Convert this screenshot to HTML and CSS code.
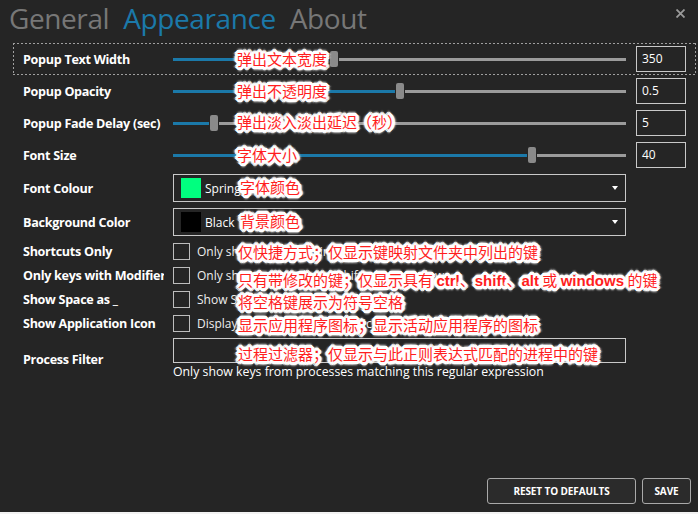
FILE: index.html
```html
<!DOCTYPE html>
<html>
<head>
<meta charset="utf-8">
<link rel="stylesheet" href="styles.css">
</head>
<body>
<div class="window">
  <header class="tabs">
    <span class="tab">General</span>
    <span class="tab active">Appearance</span>
    <span class="tab">About</span>
    <span class="close"><svg width="9" height="9" viewBox="0 0 9 9"><path d="M0.5 0.5L8.5 8.5M8.5 0.5L0.5 8.5" stroke="#9a9a9a" stroke-width="1.8"/></svg></span>
  </header>

  <div class="form">
    <div class="row slider-row focused">
      <div class="label">Popup Text Width</div>
      <div class="slider"><div class="fill" style="width:156px"></div><div class="thumb"></div><div class="rest"></div></div>
      <div class="num">350</div>
    </div>
    <div class="row slider-row">
      <div class="label">Popup Opacity</div>
      <div class="slider"><div class="fill" style="width:222px"></div><div class="thumb"></div><div class="rest"></div></div>
      <div class="num">0.5</div>
    </div>
    <div class="row slider-row">
      <div class="label">Popup Fade Delay (sec)</div>
      <div class="slider"><div class="fill" style="width:36px"></div><div class="thumb"></div><div class="rest"></div></div>
      <div class="num">5</div>
    </div>
    <div class="row slider-row">
      <div class="label">Font Size</div>
      <div class="slider"><div class="fill" style="width:354px"></div><div class="thumb"></div><div class="rest"></div></div>
      <div class="num">40</div>
    </div>

    <div class="row combo-row">
      <div class="label">Font Colour</div>
      <div class="combo"><span class="swatch spring"></span><span class="combo-text">SpringGreen</span><span class="arrow"></span></div>
    </div>
    <div class="row combo-row">
      <div class="label">Background Color</div>
      <div class="combo"><span class="swatch black"></span><span class="combo-text">Black</span><span class="arrow"></span></div>
    </div>

    <div class="row check-row">
      <div class="label">Shortcuts Only</div>
      <div class="checkline"><span class="check"></span><span class="check-text">Only show keys listed in the keymaps folder</span></div>
    </div>
    <div class="row check-row">
      <div class="label">Only keys with Modifiers</div>
      <div class="checkline"><span class="check"></span><span class="check-text">Only show keys with ctrl, shift, alt or windows</span></div>
    </div>
    <div class="row check-row">
      <div class="label">Show Space as _</div>
      <div class="checkline"><span class="check"></span><span class="check-text">Show Space as a symbol</span></div>
    </div>
    <div class="row check-row">
      <div class="label">Show Application Icon</div>
      <div class="checkline"><span class="check"></span><span class="check-text">Display icon of the active application</span></div>
    </div>

    <div class="row filter-row">
      <div class="label">Process Filter</div>
      <div class="filter">
        <div class="filter-box"></div>
        <div class="helper">Only show keys from processes matching this regular expression</div>
      </div>
    </div>
  </div>

  <div class="actions">
    <button class="btn reset">Reset to defaults</button>
    <button class="btn save">Save</button>
  </div>

  <div class="note n1">弹出文本宽度</div>
  <div class="note n2">弹出不透明度</div>
  <div class="note n3">弹出淡入淡出延迟（秒）</div>
  <div class="note n4">字体大小</div>
  <div class="note n5">字体颜色</div>
  <div class="note n6">背景颜色</div>
  <div class="note n7">仅快捷方式；仅显示键映射文件夹中列出的键</div>
  <div class="note n8">只有带修改的键；仅显示具有 <b>ctrl</b>、<b>shift</b>、<b>alt</b> 或 <b>windows</b> 的键</div>
  <div class="note n9">将空格键展示为符号空格</div>
  <div class="note n10">显示应用程序图标；显示活动应用程序的图标</div>
  <div class="note n11">过程过滤器；仅显示与此正则表达式匹配的进程中的键</div>
</div>
</body>
</html>
```
FILE: styles.css
```css
html, body {
  margin: 0;
  padding: 0;
  background: #f2f2f2;
}

.window {
  position: relative;
  width: 698px;
  height: 512px;
  background: #252525;
  color: #ffffff;
  font-family: "Open Sans", "Noto Sans", sans-serif;
  display: flex;
  flex-direction: column;
  overflow: hidden;
}

/* header */
.tabs {
  height: 43px;
  display: flex;
  align-items: flex-start;
  padding-left: 9px;
  box-sizing: border-box;
}
.tab {
  font-size: 28px;
  line-height: 34px;
  padding-top: 1px;
  margin-right: 14px;
  color: #777777;
  letter-spacing: -0.4px;
}
.tab.active {
  color: #1b79a9;
}
.close {
  margin-left: auto;
  margin-top: 9px;
  margin-right: 13px;
  width: 9px;
  height: 9px;
  display: flex;
}

/* form */
.form {
  padding: 3px 0 0 16px;
  display: flex;
  flex-direction: column;
}
.row {
  position: relative;
  width: 677px;
  box-sizing: border-box;
  padding-left: 7px;
  display: grid;
  grid-template-columns: 140px 453px 50px;
  column-gap: 10px;
  align-items: center;
}
.label {
  width: 141px;
  overflow: hidden;
  white-space: nowrap;
  font-weight: 700;
  font-size: 12.6px;
  letter-spacing: -0.3px;
}

.slider-row {
  height: 26px;
  margin-bottom: 6px;
}
.focused::before {
  content: "";
  position: absolute;
  left: -3px;
  right: -3px;
  top: -3px;
  bottom: -3px;
  background:
    repeating-linear-gradient(90deg, #a0a0a0 0 2px, transparent 2px 4px) top / 100% 1px no-repeat,
    repeating-linear-gradient(90deg, #a0a0a0 0 2px, transparent 2px 4px) bottom / 100% 1px no-repeat,
    repeating-linear-gradient(180deg, #a0a0a0 0 2px, transparent 2px 4px) left / 1px 100% no-repeat,
    repeating-linear-gradient(180deg, #a0a0a0 0 2px, transparent 2px 4px) right / 1px 100% no-repeat;
  pointer-events: none;
}
.slider {
  height: 26px;
  display: flex;
  align-items: center;
}
.fill {
  height: 3px;
  background: #1b79a9;
}
.thumb {
  width: 8px;
  height: 16px;
  margin: 0 1px;
  border-radius: 2px;
  background: #8a8a8a;
}
.rest {
  flex: 1;
  height: 3px;
  background: #9b9b9b;
}
.num {
  height: 26px;
  box-sizing: border-box;
  border: 1px solid #c9c9c9;
  font-size: 12px;
  line-height: 24px;
  padding-left: 5px;
}

.combo-row {
  height: 28px;
  margin-bottom: 6px;
}
.combo-row + .check-row {
  margin-top: 1px;
}
.combo {
  height: 28px;
  box-sizing: border-box;
  border: 1px solid #c9c9c9;
  display: flex;
  align-items: center;
  padding: 0 7px 0 7px;
}
.swatch {
  width: 20px;
  height: 20px;
  margin-right: 4px;
}
.swatch.spring { background: #00ff7f; }
.swatch.black { background: #000000; }
.combo-text {
  font-size: 12px;
}
.arrow {
  margin-left: auto;
  width: 0;
  height: 0;
  border-left: 3px solid transparent;
  border-right: 3px solid transparent;
  border-top: 4px solid #ffffff;
}

.check-row {
  height: 17px;
  margin-bottom: 7px;
}
.checkline {
  display: flex;
  align-items: center;
  height: 17px;
  white-space: nowrap;
}
.check {
  width: 17px;
  height: 17px;
  box-sizing: border-box;
  border: 1px solid #bdbdbd;
  flex: none;
}
.check-text {
  margin-left: 7px;
  font-size: 12px;
  color: #eeeeee;
}

.filter-row {
  margin-top: -1px;
}
.filter-box {
  height: 25px;
  box-sizing: border-box;
  border: 1px solid #c9c9c9;
}
.helper {
  font-size: 12.3px;
  line-height: 17px;
  white-space: nowrap;
  color: #ffffff;
}

/* buttons */
.actions {
  margin-top: auto;
  display: flex;
  justify-content: flex-end;
  gap: 6px;
  padding: 0 7px 8px 0;
}
.btn {
  height: 26px;
  box-sizing: border-box;
  border: 1px solid #a9a9a9;
  border-radius: 3px;
  background: #2b2b2b;
  color: #ffffff;
  font-family: "Open Sans", "Noto Sans", sans-serif;
  font-weight: 700;
  font-size: 10px;
  text-transform: uppercase;
  letter-spacing: -0.1px;
  padding: 0;
}
.btn.reset { width: 149px; }
.btn.save { width: 49px; }

/* annotation overlays */
.note {
  position: absolute;
  font-family: "Noto Sans CJK SC", "Noto Sans", sans-serif;
  font-size: 15px;
  line-height: 20px;
  color: #ff1e1e;
  white-space: nowrap;
  text-shadow:
    2px 0 0 #fff, -2px 0 0 #fff, 0 2px 0 #fff, 0 -2px 0 #fff,
    2px 2px 0 #fff, -2px 2px 0 #fff, 2px -2px 0 #fff, -2px -2px 0 #fff,
    3px 1px 0 #fff, -3px 1px 0 #fff, 3px -1px 0 #fff, -3px -1px 0 #fff,
    1px 3px 0 #fff, -1px 3px 0 #fff, 1px -3px 0 #fff, -1px -3px 0 #fff,
    3px 0 1px #fff, -3px 0 1px #fff, 0 3px 1px #fff, 0 -3px 1px #fff,
    4px 0 2px #fff, -4px 0 2px #fff, 0 4px 2px #fff, 0 -4px 2px #fff,
    0 0 4px #fff, 0 0 4px #fff;
}
.note b {
  font-family: "Liberation Sans", "Noto Sans", sans-serif;
  font-weight: 700;
}
.n1 { left: 237px; top: 49px; }
.n2 { left: 237px; top: 81px; }
.n3 { left: 237px; top: 112px; }
.n4 { left: 237px; top: 145px; }
.n5 { left: 240px; top: 177px; }
.n6 { left: 240px; top: 211px; }
.n7 { left: 238px; top: 242px; }
.n8 { left: 238px; top: 270px; }
.n9 { left: 238px; top: 292px; }
.n10 { left: 238px; top: 315px; }
.n11 { left: 238px; top: 344px; }
```
